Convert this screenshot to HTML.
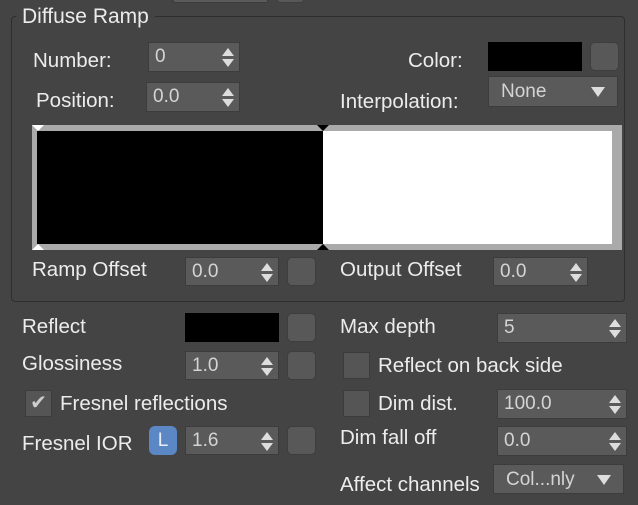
<!DOCTYPE html><html><head><style>
body{margin:0;width:638px;height:505px;background:#444;overflow:hidden;position:relative;font-family:"Liberation Sans",sans-serif;font-size:20.5px;color:#ececec}
.a{position:absolute}
.l{position:absolute;line-height:22px;white-space:nowrap}
.f{position:absolute;background:#5a5a5a;border:1px solid #3c3c3c;box-sizing:border-box;color:#d4d4d4;font-size:19px;line-height:27px;padding-left:6px}
.sp{position:absolute;right:5px;top:5px;width:12px;height:19px}
.sp:before{content:"";position:absolute;left:0;top:0;border-left:6px solid transparent;border-right:6px solid transparent;border-bottom:8px solid #ddd}
.sp:after{content:"";position:absolute;left:0;bottom:0;border-left:6px solid transparent;border-right:6px solid transparent;border-top:8px solid #ddd}
.b{position:absolute;background:#585858;border:1px solid #3e3e3e;border-radius:5px;box-sizing:border-box;width:29px;height:29px}
.k{position:absolute;background:#555;border:1px solid #3c3c3c;box-sizing:border-box;width:27px;height:27px}
.dd{position:absolute;background:#5a5a5a;border:1px solid #3c3c3c;box-sizing:border-box;color:#d4d4d4;font-size:19px;line-height:29px;padding-left:12px}
.dd i{position:absolute;right:12px;top:10px;border-left:7px solid transparent;border-right:7px solid transparent;border-top:10px solid #ddd}
</style></head><body>
<div class="f" style="left:173px;top:-26px;width:95px;height:29px"></div>
<div class="b" style="left:276px;top:-26px"></div>
<div class="a" style="left:11px;top:16px;width:614px;height:286px;border:1px solid #2e2e2e;border-radius:4px;box-sizing:border-box"></div>
<div class="l" style="left:16px;top:6px;background:#444;padding:0 6px;font-size:21px">Diffuse Ramp</div>
<div class="l" style="left:33px;top:50px">Number:</div>
<div class="f" style="left:148px;top:42px;width:92px;height:30px">0<span class="sp"></span></div>
<div class="l" style="left:36px;top:90px">Position:</div>
<div class="f" style="left:146px;top:82px;width:94px;height:30px">0.0<span class="sp"></span></div>
<div class="l" style="left:408px;top:50px">Color:</div>
<div class="a" style="left:488px;top:42px;width:94px;height:29px;background:#000"></div>
<div class="b" style="left:590px;top:42px"></div>
<div class="l" style="left:340px;top:91px">Interpolation:</div>
<div class="dd" style="left:488px;top:76px;width:130px;height:31px">None<i></i></div>
<div class="a" style="left:32px;top:125px;width:590px;height:125px;background:#aaa"></div>
<div class="a" style="left:37px;top:131px;width:286px;height:113px;background:#000"></div>
<div class="a" style="left:323px;top:131px;width:289px;height:113px;background:#fff"></div>
<div class="a" style="left:32px;top:125px;border-left:6px solid transparent;border-right:6px solid transparent;border-top:6px solid #fff"></div>
<div class="a" style="left:317px;top:125px;border-left:6px solid transparent;border-right:6px solid transparent;border-top:6px solid #000"></div>
<div class="a" style="left:32px;top:244px;border-left:6px solid transparent;border-right:6px solid transparent;border-bottom:6px solid #fff"></div>
<div class="a" style="left:317px;top:244px;border-left:6px solid transparent;border-right:6px solid transparent;border-bottom:6px solid #000"></div>
<div class="l" style="left:32px;top:259px">Ramp Offset</div>
<div class="f" style="left:185px;top:257px;width:94px;height:29px">0.0<span class="sp"></span></div>
<div class="b" style="left:287px;top:257px"></div>
<div class="l" style="left:340px;top:259px">Output Offset</div>
<div class="f" style="left:493px;top:257px;width:95px;height:29px">0.0<span class="sp"></span></div>
<div class="l" style="left:22px;top:316px">Reflect</div>
<div class="a" style="left:185px;top:313px;width:94px;height:29px;background:#000"></div>
<div class="b" style="left:287px;top:313px"></div>
<div class="l" style="left:340px;top:316px">Max depth</div>
<div class="f" style="left:497px;top:313px;width:130px;height:30px">5<span class="sp"></span></div>
<div class="l" style="left:22px;top:353px">Glossiness</div>
<div class="f" style="left:185px;top:351px;width:94px;height:29px">1.0<span class="sp"></span></div>
<div class="b" style="left:287px;top:351px"></div>
<div class="k" style="left:343px;top:352px"></div>
<div class="l" style="left:378px;top:355px">Reflect on back side</div>
<div class="k" style="left:25px;top:390px;color:#ccc;font-size:20px;line-height:25px;text-align:center">✔</div>
<div class="l" style="left:60px;top:393px">Fresnel reflections</div>
<div class="k" style="left:343px;top:390px"></div>
<div class="l" style="left:378px;top:393px">Dim dist.</div>
<div class="f" style="left:497px;top:389px;width:130px;height:30px">100.0<span class="sp"></span></div>
<div class="l" style="left:22px;top:433px">Fresnel IOR</div>
<div class="a" style="left:149px;top:426px;width:28px;height:29px;background:#5b87c5;border-radius:6px;color:#e8eef8;text-align:center;line-height:29px;font-size:19px">L</div>
<div class="f" style="left:185px;top:426px;width:94px;height:29px">1.6<span class="sp"></span></div>
<div class="b" style="left:287px;top:426px"></div>
<div class="l" style="left:340px;top:427px">Dim fall off</div>
<div class="f" style="left:497px;top:426px;width:130px;height:30px">0.0<span class="sp"></span></div>
<div class="l" style="left:340px;top:474px">Affect channels</div>
<div class="dd" style="left:493px;top:464px;width:131px;height:30px">Col...nly<i></i></div>
</body></html>
